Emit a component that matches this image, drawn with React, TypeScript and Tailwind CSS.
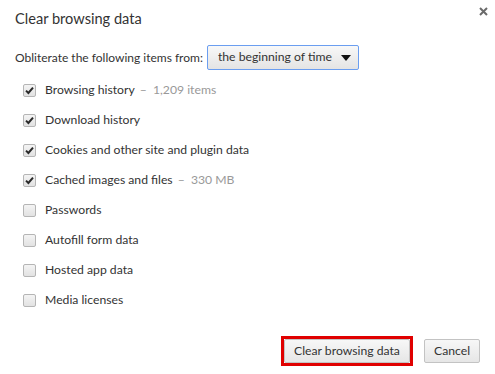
import React from "react";

const items: { label: string; extra?: string; checked: boolean }[] = [
  { label: "Browsing history", extra: "1,209 items", checked: true },
  { label: "Download history", checked: true },
  { label: "Cookies and other site and plugin data", checked: true },
  { label: "Cached images and files", extra: "330 MB", checked: true },
  { label: "Passwords", checked: false },
  { label: "Autofill form data", checked: false },
  { label: "Hosted app data", checked: false },
  { label: "Media licenses", checked: false },
];

function Box({ checked }: { checked: boolean }) {
  return (
    <div className="w-[13px] h-[13px] rounded-[2px] border border-[#b5b5b5] bg-gradient-to-b from-[#f4f4f4] to-[#e2e2e2] flex items-center justify-center shrink-0">
      {checked && (
        <svg width="11" height="11" viewBox="0 0 11 11">
          <path d="M2 5.6 L4.4 8 L9 2.6" fill="none" stroke="#2a2a2a" strokeWidth="2" />
        </svg>
      )}
    </div>
  );
}

export default function App() {
  return (
    <div
      className="w-[495px] h-[374px] bg-white relative text-[#333]"
      style={{ fontFamily: "Lato, 'Open Sans', sans-serif" }}
    >
      <svg className="absolute left-[479px] top-[7px]" width="9" height="9" viewBox="0 0 9 9">
        <path d="M1 1 L8 8 M8 1 L1 8" stroke="#6b6b6b" strokeWidth="2" />
      </svg>
      <div className="pl-[15px] pt-[8px]">
        <div className="text-[14.6px] leading-[22px] text-[#333]">Clear browsing data</div>
        <div className="mt-[15px] flex items-center h-[25px] text-[12px]">
          <span className="text-[#333]">Obliterate the following items from:</span>
          <div className="ml-[4px] w-[152px] h-[25px] border border-[#6b9ef0] rounded-[2px] bg-gradient-to-b from-[#f8f8f8] to-[#e4e4e4] flex items-center pl-[10px] pr-[7px]">
            <span className="flex-1 text-[#333] text-[12.2px]">the beginning of time</span>
            <svg width="10" height="6" viewBox="0 0 10 6">
              <path d="M0 0 L10 0 L5 6 Z" fill="#111" />
            </svg>
          </div>
        </div>
        <div className="mt-[5px] flex flex-col">
          {items.map((it) => (
            <div key={it.label} className="h-[30px] flex items-center pl-[8px] text-[12.2px]">
              <Box checked={it.checked} />
              <span className="ml-[9px] text-[#333]">{it.label}</span>
              {it.extra && (
                <span className="ml-[5px] text-[#999]">–&nbsp;&nbsp;{it.extra}</span>
              )}
            </div>
          ))}
        </div>
      </div>
      <div className="absolute left-0 right-0 top-[336px] flex justify-end pr-[15px] gap-[11px] text-[12.2px]">
        <div className="border-[3px] border-[#e00000] p-0">
          <button className="h-[24px] w-[126px] border border-[#c3c3c3] rounded-[2px] bg-gradient-to-b from-[#f7f7f7] to-[#e6e6e6] text-[#333]">
            Clear browsing data
          </button>
        </div>
        <button className="mt-[3px] h-[24px] w-[56px] border border-[#c3c3c3] rounded-[2px] bg-gradient-to-b from-[#f7f7f7] to-[#e6e6e6] text-[#333]">
          Cancel
        </button>
      </div>
    </div>
  );
}
